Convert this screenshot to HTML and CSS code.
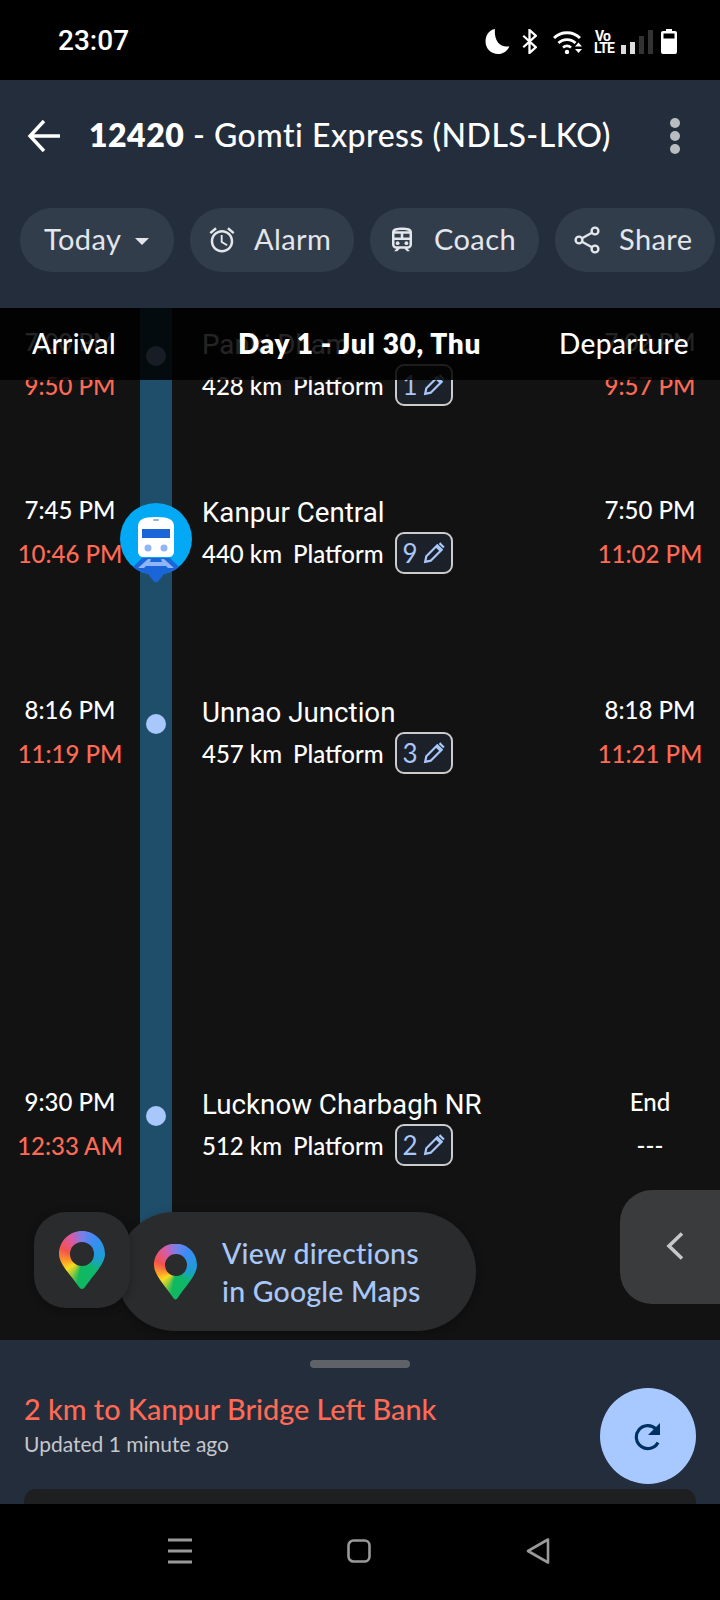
FILE: index.html
```html
<!DOCTYPE html>
<html>
<head>
<meta charset="utf-8">
<title>12420 - Gomti Express</title>
<link rel="stylesheet" href="styles.css">
</head>
<body>
<div class="statusbar">
	<span class="clock">23:07</span>
	<div class="sysicons">
		<svg class="ic-moon" width="25" height="25" viewBox="0 0 23 24"><path fill="#fff" d="M9 0C3.500 1 0 6 0 12c0 7 5.500 12 12 12 5 0 9-3 11-7.500C16 18 8 14 9 0z"/></svg>
		<svg class="ic-bt" width="15" height="25" viewBox="0 0 14 24"><path fill="none" stroke="#fff" stroke-width="2.200" d="M1 6.500l12 11L7 23V1l6 5.500-12 11"/></svg>
		<svg class="ic-wifi" width="30" height="24" viewBox="0 0 30 24"><g fill="none" stroke="#fff" stroke-width="2.800"><path d="M1 8c7-7 19-7 26 0"/><path d="M5.500 13c4.500-4.500 12.500-4.500 17 0"/><path d="M10 17.500c2.500-2 5.500-2 8 0"/></g><circle cx="14" cy="22" r="2.200" fill="#fff"/><path fill="#fff" d="M22 16.500l3.500-4 3.500 4zM22 19h7l-3.500 4z"/></svg>
		<span class="volte">Vo<br>LTE</span>
		<div class="signal"><i class="s1"></i><i class="s2"></i><i class="s3"></i><i class="s4"></i></div>
		<svg class="ic-batt" width="16" height="25" viewBox="0 0 16 25"><path fill="#fff" d="M5 0h6v2h3a2 2 0 0 1 2 2v19a2 2 0 0 1-2 2H2a2 2 0 0 1-2-2V4a2 2 0 0 1 2-2h3z"/><rect x="2.500" y="4.500" width="11" height="5" fill="#000"/></svg>
	</div>
</div>

<header class="appbar">
	<div class="titlerow">
		<svg class="back" width="34" height="34" viewBox="0 0 34 34"><path fill="none" stroke="#fff" stroke-width="3.400" d="M33 17H3M17 2L3 17l14 15"/></svg>
		<h1><b>12420</b> - Gomti Express (NDLS-LKO)</h1>
		<div class="more"><i></i><i></i><i></i></div>
	</div>
	<div class="chips">
		<div class="chip chip-today">Today<span class="caret"></span></div>
		<div class="chip chip-alarm">
			<svg width="30" height="30" viewBox="0 0 24 24"><path fill="#e3e6ea" d="M22 5.720l-4.600-3.860-1.290 1.530 4.600 3.860L22 5.720zM7.880 3.390L6.600 1.860 2 5.710l1.290 1.530 4.590-3.850zM12.500 8H11v6l4.750 2.850.75-1.230-4-2.370V8zM12 4c-4.970 0-9 4.030-9 9s4.030 9 9 9 9-4.030 9-9-4.030-9-9-9zm0 16c-3.870 0-7-3.130-7-7s3.130-7 7-7 7 3.130 7 7-3.130 7-7 7z"/></svg>
			Alarm
		</div>
		<div class="chip chip-coach">
			<svg width="30" height="30" viewBox="0 0 24 24"><path fill="#e3e6ea" d="M12 2c-4 0-8 .5-8 4v9.500C4 17.430 5.570 19 7.500 19L6 20.500v.5h2.230l2-2H14l2 2h2v-.5L16.500 19c1.930 0 3.500-1.570 3.500-3.500V6c0-3.500-3.580-4-8-4zm0 2c3.510 0 4.960.48 5.570 1H6.430c.61-.52 2.060-1 5.570-1zM6 7h5v3H6V7zm12 8.500c0 .83-.67 1.500-1.500 1.500h-9c-.83 0-1.500-.67-1.500-1.500V12h12v3.500zm0-5.500h-5V7h5v3z"/><circle cx="8.500" cy="14.500" r="1.500" fill="#e3e6ea"/><circle cx="15.500" cy="14.500" r="1.500" fill="#e3e6ea"/></svg>
			Coach
		</div>
		<div class="chip chip-share">
			<svg width="26" height="28" viewBox="0 0 26 28"><g fill="none" stroke="#e3e6ea" stroke-width="2.400"><circle cx="21" cy="5" r="3.400"/><circle cx="5" cy="14" r="3.400"/><circle cx="21" cy="23" r="3.400"/><path d="M8 12.300l10-5.600M8 15.700l10 5.600"/></g></svg>
			Share
		</div>
	</div>
</header>

<main class="schedule">
	<div class="stop">
		<div class="times"><span>7:00 PM</span><span class="late">9:50 PM</span></div>
		<div class="track"><i class="dot"></i></div>
		<div class="info">
			<div class="name">Panki Dham</div>
			<div class="sub">428 km <span class="pf">Platform</span> <span class="pfbox">1 <svg width="22" height="22" viewBox="0 0 20 20"><path fill="none" stroke="#a8c7fa" stroke-width="2" d="M2 18l1-5L13 3l4 4L7 17zM12 4l4 4M15 1l4 4"/></svg></span></div>
		</div>
		<div class="times times-r"><span>7:02 PM</span><span class="late">9:57 PM</span></div>
	</div>

	<div class="stop">
		<div class="times"><span>7:45 PM</span><span class="late">10:46 PM</span></div>
		<div class="track">
			<svg class="marker" width="72" height="80" viewBox="0 0 72 80">
				<circle cx="36" cy="36" r="36" fill="#03a9f4"/>
				<path fill="#1a66d9" d="M13 64 L22 55H50L59 64C54 68 49 70 44 71L38 78.500C37 79.500 35 79.500 34 78.500L28 71C23 70 18 68 13 64z"/>
				<path fill="#90b4f8" d="M18 65l10-9h3l-1 3h12l-1-3h3l10 9h-6l-2-2H26l-2 2z"/>
				<path fill="#fff" d="M18 24c0-7 4-10 18-10s18 3 18 10v24c0 4-2 6-6 6H24c-4 0-6-2-6-6z"/>
				<rect x="22" y="26" width="28" height="9" fill="#1a66d9"/>
				<rect x="33" y="16" width="6" height="2" rx="1" fill="#90b4f8"/>
				<circle cx="28" cy="45" r="3.500" fill="#90b4f8"/>
				<circle cx="44" cy="45" r="3.500" fill="#90b4f8"/>
			</svg>
		</div>
		<div class="info">
			<div class="name">Kanpur Central</div>
			<div class="sub">440 km <span class="pf">Platform</span> <span class="pfbox">9 <svg width="22" height="22" viewBox="0 0 20 20"><path fill="none" stroke="#a8c7fa" stroke-width="2" d="M2 18l1-5L13 3l4 4L7 17zM12 4l4 4M15 1l4 4"/></svg></span></div>
		</div>
		<div class="times times-r"><span>7:50 PM</span><span class="late">11:02 PM</span></div>
	</div>

	<div class="stop">
		<div class="times"><span>8:16 PM</span><span class="late">11:19 PM</span></div>
		<div class="track"><i class="dot"></i></div>
		<div class="info">
			<div class="name">Unnao Junction</div>
			<div class="sub">457 km <span class="pf">Platform</span> <span class="pfbox">3 <svg width="22" height="22" viewBox="0 0 20 20"><path fill="none" stroke="#a8c7fa" stroke-width="2" d="M2 18l1-5L13 3l4 4L7 17zM12 4l4 4M15 1l4 4"/></svg></span></div>
		</div>
		<div class="times times-r"><span>8:18 PM</span><span class="late">11:21 PM</span></div>
	</div>

	<div class="stop">
		<div class="times"><span>9:30 PM</span><span class="late">12:33 AM</span></div>
		<div class="track"><i class="dot"></i></div>
		<div class="info">
			<div class="name">Lucknow Charbagh NR</div>
			<div class="sub">512 km <span class="pf">Platform</span> <span class="pfbox">2 <svg width="22" height="22" viewBox="0 0 20 20"><path fill="none" stroke="#a8c7fa" stroke-width="2" d="M2 18l1-5L13 3l4 4L7 17zM12 4l4 4M15 1l4 4"/></svg></span></div>
		</div>
		<div class="times times-r times-end"><span>End</span><span>---</span></div>
	</div>

	<!-- sticky day header, sits over the first row -->
	<div class="dayband">
		<span>Arrival</span>
		<b>Day 1 - Jul 30, Thu</b>
		<span>Departure</span>
	</div>

	<div class="mappill">
		<div class="pin pin-sm"></div>
		<div class="mappill-text">View directions<br>in Google Maps</div>
	</div>
	<div class="mapbtn"><div class="pin pin-lg"></div></div>
	<div class="sidetab">
		<svg width="18" height="28" viewBox="0 0 18 28"><path fill="none" stroke="#c8c8c8" stroke-width="3.600" d="M16 1.500L3 14l13 12.500"/></svg>
	</div>
</main>

<section class="sheet">
	<div class="handle"></div>
	<div class="sheet-row">
		<div>
			<div class="distance">2 km to Kanpur Bridge Left Bank</div>
			<div class="updated">Updated 1 minute ago</div>
		</div>
		<div class="fab">
			<svg width="30" height="30" viewBox="0 0 30 30"><path fill="none" stroke="#00315f" stroke-width="3.200" d="M23 8A11.500 11.500 0 1 0 25 21.500"/><path fill="#00315f" d="M27 2v12H15z"/></svg>
		</div>
	</div>
	<div class="card"></div>
</section>

<nav class="navbar">
	<svg width="24" height="26" viewBox="0 0 24 26"><path stroke="#999" stroke-width="3" d="M0 2h24M0 13h24M0 24h24"/></svg>
	<svg width="24" height="24" viewBox="0 0 24 24"><rect x="1.500" y="1.500" width="21" height="21" rx="5" fill="none" stroke="#999" stroke-width="2.600"/></svg>
	<svg width="26" height="28" viewBox="0 0 26 28"><path d="M23 2.500L3 14l20 11.500z" fill="none" stroke="#999" stroke-width="2.600" stroke-linejoin="round"/></svg>
</nav>
</body>
</html>
```

FILE: styles.css
```css
* {
	box-sizing: border-box;
}

html, body {
	margin: 0;
	padding: 0;
}

body {
	width: 720px;
	height: 1600px;
	overflow: hidden;
	display: flex;
	flex-direction: column;
	background: #000;
	color: #fff;
	font-family: Lato, 'Noto Sans', sans-serif;
}

/* status bar */
.statusbar {
	height: 80px;
	flex: none;
	background: #000;
	display: flex;
	align-items: center;
	padding: 0 43px 0 58px;
	justify-content: space-between;
}

.clock {
	font: 500 28px Roboto, sans-serif;
}

.sysicons {
	display: flex;
	align-items: flex-end;
	height: 25px;
	position: relative;
	top: 1px;
}

.ic-moon { margin-right: 12px; }
.ic-bt { margin-right: 16px; }
.ic-wifi { margin-right: 11px; }

.volte {
	font: 700 14px/12px Roboto, sans-serif;
	text-align: center;
	width: 17px;
	margin-right: 10px;
	letter-spacing: -.8px;
}

.signal {
	display: flex;
	align-items: flex-end;
	gap: 4px;
	height: 24px;
	margin-right: 8px;
}

.signal i {
	display: block;
	width: 5px;
	background: #333;
}

.signal .s1 { height: 9px; background: #ddd; }
.signal .s2 { height: 12px; background: #ddd; }
.signal .s3 { height: 18px; }
.signal .s4 { height: 24px; }

/* app bar */
.appbar {
	height: 228px;
	flex: none;
	background: #242d3c;
	padding-top: 36px;
}

.titlerow {
	display: flex;
	align-items: center;
	height: 40px;
	padding: 0 40px 0 27px;
}

.titlerow h1 {
	flex: 1;
	margin: 0 0 3px 28px;
	font-size: 32px;
	font-weight: 500;
	letter-spacing: .5px;
	white-space: nowrap;
}

.titlerow h1 b {
	font-weight: 800;
}

.more i {
	display: block;
	width: 10px;
	height: 10px;
	border-radius: 50%;
	background: #b9bcc1;
	margin: 3px 0;
}

.chips {
	display: flex;
	gap: 16px;
	padding-left: 20px;
	margin-top: 52px;
}

.chip {
	height: 64px;
	border-radius: 32px;
	background: #323d4c;
	display: flex;
	align-items: center;
	font-size: 29px;
	letter-spacing: .4px;
	padding-bottom: 3px;
	color: #e3e6ea;
	flex: none;
}

.chip svg { flex: none; margin-top: 3px; }

.chip-today { width: 154px; padding-left: 24px; }
.chip-alarm { width: 164px; padding-left: 17px; gap: 17px; }
.chip-coach { width: 169px; padding-left: 17px; gap: 17px; }
.chip-share { width: 160px; padding-left: 19px; gap: 19px; }

.caret {
	width: 0;
	height: 0;
	border-left: 7px solid transparent;
	border-right: 7px solid transparent;
	border-top: 7px solid #e3e6ea;
	margin-left: 14px;
	margin-top: 6px;
}

/* timeline */
.schedule {
	height: 1032px;
	flex: none;
	background: #121212;
	position: relative;
	overflow: hidden;
	display: grid;
	grid-template-rows: 168px 200px 392px 170px;
}

.stop {
	display: grid;
	grid-template-columns: 140px 32px 1fr 118px;
}

.times {
	padding-top: 12px;
	display: flex;
	flex-direction: column;
	align-items: center;
	font-size: 24px;
	white-space: nowrap;
	line-height: 44px;
	font-weight: 500;
}

.times-r {
	padding-right: 22px;
}

.times-end {
	padding-right: 22px;
}

.late {
	color: #ff6a55;
}

.track {
	background: #1f4e6b;
	position: relative;
	padding-top: 38px;
}

.dot {
	display: block;
	width: 20px;
	height: 20px;
	border-radius: 50%;
	background: #a8c7fa;
	margin: 0 auto;
}

.marker {
	position: absolute;
	left: -20px;
	top: 27px;
}

.info {
	padding: 20px 0 0 30px;
}

.name {
	font: 27.700px/34px Roboto, sans-serif;
	white-space: nowrap;
}

.sub {
	display: flex;
	align-items: center;
	height: 42px;
	margin-top: 2px;
	font-size: 24px;
	font-weight: 500;
	white-space: nowrap;
}

.pf {
	margin-left: 11px;
}

.pfbox {
	width: 58px;
	height: 42px;
	border: 2px solid #ccc;
	border-radius: 9px;
	background: #1c2029;
	margin-left: 11px;
	display: flex;
	align-items: center;
	justify-content: center;
	gap: 5px;
	color: #a8c7fa;
	font-size: 26px;
	font-weight: 400;
}

.dayband {
	position: absolute;
	left: 0;
	top: 0;
	width: 100%;
	height: 72px;
	background: rgba(0,0,0,.86);
	display: flex;
	align-items: center;
	justify-content: space-between;
	padding: 0 31px 2px 32px;
	font-size: 28px;
	font-weight: 500;
	letter-spacing: .4px;
}

.dayband b {
	font-weight: 800;
	letter-spacing: .7px;
	margin-left: 44px;
}

/* floating buttons */
.mapbtn {
	position: absolute;
	left: 34px;
	top: 904px;
	width: 96px;
	height: 96px;
	border-radius: 32px;
	background: #2a2b2d;
	box-shadow: 0 2px 8px rgba(0,0,0,.3);
	display: flex;
	align-items: center;
	justify-content: center;
}

.mappill {
	position: absolute;
	left: 116px;
	top: 904px;
	width: 360px;
	height: 119px;
	border-radius: 59px;
	background: #2a2b2d;
	box-shadow: 0 2px 8px rgba(0,0,0,.3);
	display: flex;
	align-items: center;
	padding-left: 38px;
	gap: 25px;
}

.mappill-text {
	font-size: 28.500px;
	letter-spacing: .2px;
	line-height: 38px;
	color: #a8c7fa;
	font-weight: 500;
	white-space: nowrap;
}

.pin {
	flex: none;
	position: relative;
	background: conic-gradient(from 0deg, #7a7fe8 0deg, #3b8cf5 30deg, #1a9fd0 85deg, #0fb86a 130deg, #0fb860 190deg, #9ccc3a 215deg, #fbdc1e 240deg, #fb9a2a 268deg, #f4524e 300deg, #d85aa8 335deg, #7a7fe8 360deg);
}

.pin::after {
	content: '';
	position: absolute;
	border-radius: 50%;
	background: #2a2b2d;
}

.pin-lg {
	width: 46px;
	height: 58px;
	clip-path: path('M23 0C35.700 0 46 10.300 46 23C46 33 35 43 26 56C24.500 58.600 21.500 58.600 20 56C11 43 0 33 0 23C0 10.300 10.300 0 23 0z');
}

.pin-lg::after {
	left: 11px;
	top: 11px;
	width: 24px;
	height: 24px;
}

.pin-sm {
	width: 43px;
	height: 56px;
	clip-path: path('M21.500 0C33.400 0 43 9.600 43 21.500C43 31 33 41 24 54C22.700 56.500 20.300 56.500 19 54C10 41 0 31 0 21.500C0 9.600 9.600 0 21.500 0z');
}

.pin-sm::after {
	left: 10.500px;
	top: 10.500px;
	width: 22px;
	height: 22px;
}

.sidetab {
	position: absolute;
	left: 620px;
	top: 882px;
	width: 100px;
	height: 114px;
	border-radius: 32px 0 0 32px;
	background: #3a3b3c;
	padding: 42px 0 0 46px;
}

/* bottom sheet */
.sheet {
	height: 164px;
	flex: none;
	background: #242d3c;
	padding-top: 20px;
	overflow: hidden;
}

.handle {
	width: 100px;
	height: 8px;
	border-radius: 4px;
	background: #5f6368;
	margin: 0 auto;
}

.sheet-row {
	display: flex;
	justify-content: space-between;
	padding: 20px 24px 0 24px;
}

.distance {
	font-size: 28.800px;
	line-height: 36px;
	color: #ff6a55;
	font-weight: 500;
	margin-top: 3px;
}

.updated {
	font-size: 21px;
	line-height: 24px;
	color: #c4c7cc;
	margin-top: 5px;
}

.fab {
	width: 96px;
	height: 96px;
	border-radius: 50%;
	background: #a8c9ff;
	display: flex;
	align-items: center;
	justify-content: center;
	flex: none;
}

.card {
	height: 30px;
	margin: 5px 24px 0;
	border-radius: 12px;
	background: #1e1f21;
}

/* nav bar */
.navbar {
	height: 96px;
	flex: none;
	background: #000;
	display: flex;
	align-items: center;
	padding: 0 169px 2px 168px;
	justify-content: space-between;
}
```
